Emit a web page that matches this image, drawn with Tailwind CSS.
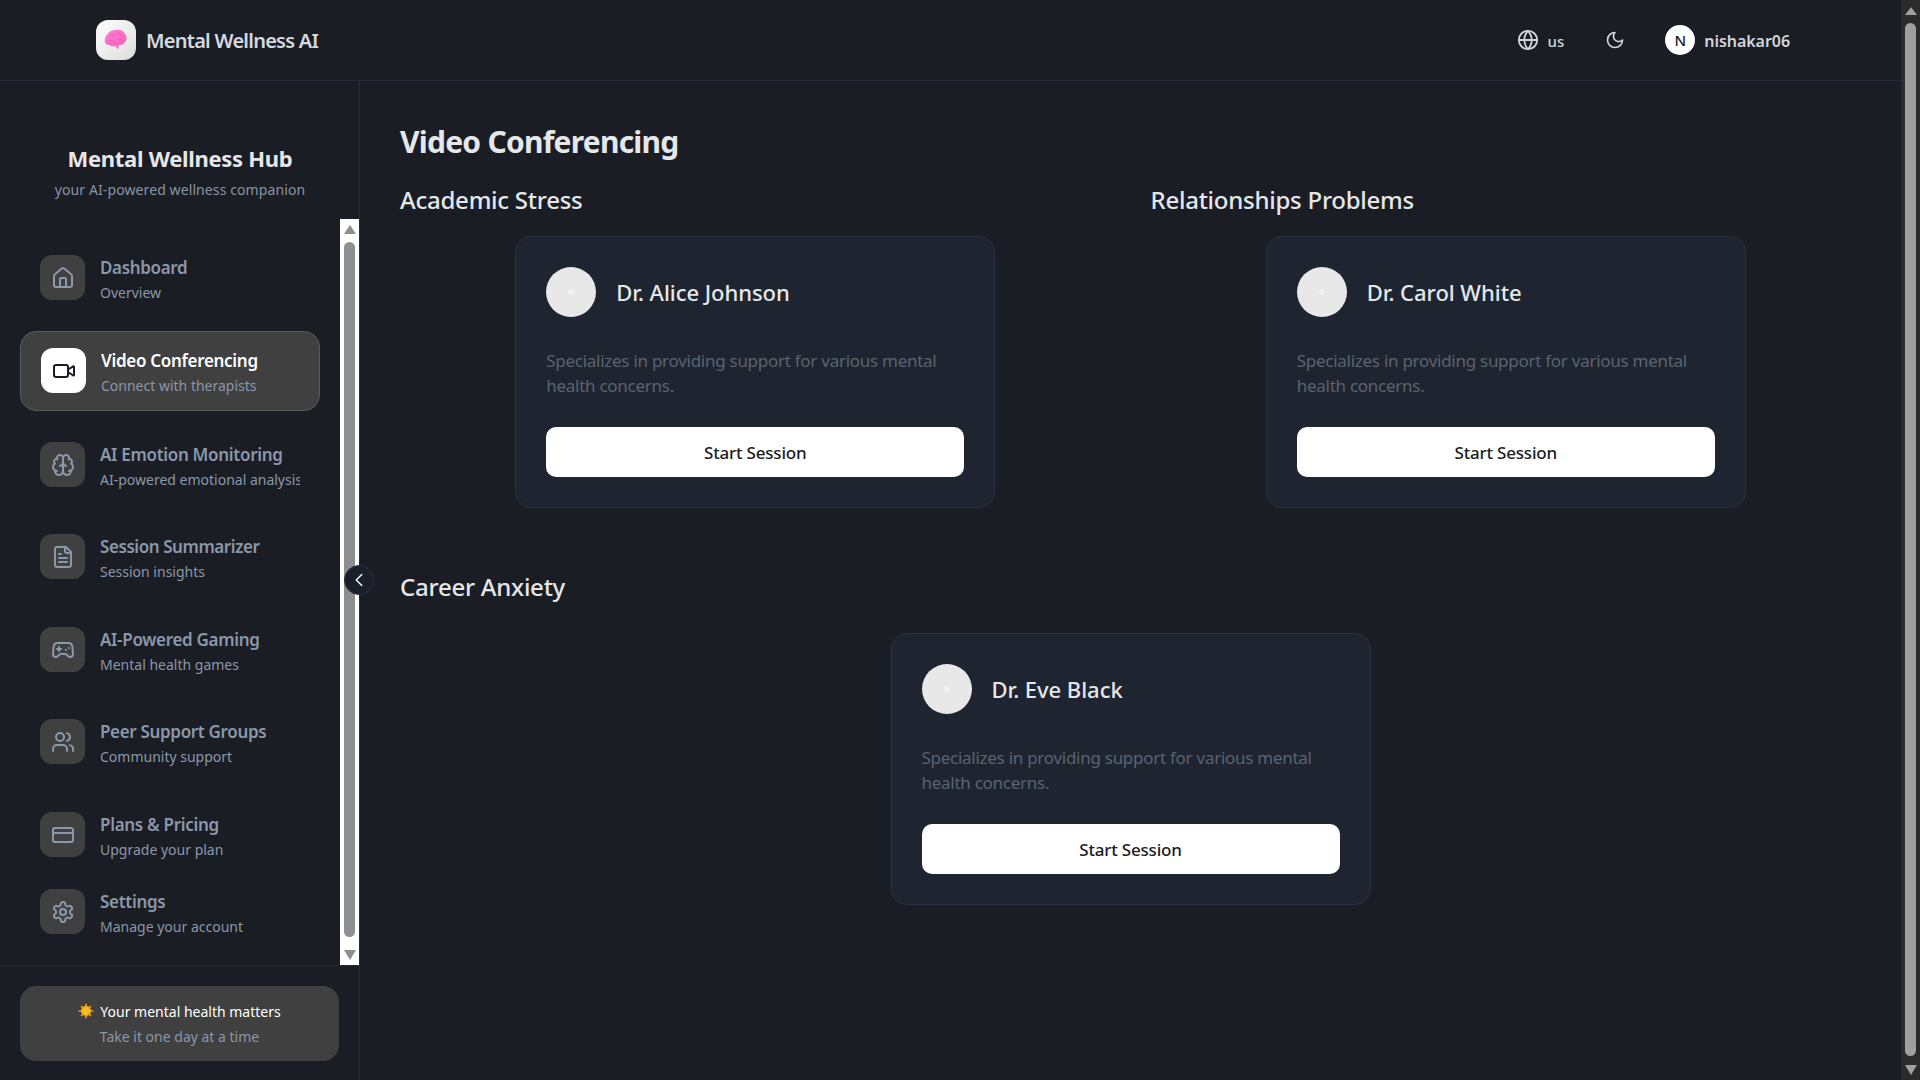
<!DOCTYPE html>
<html lang="en">
<head>
    <meta charset="UTF-8">
    <title>Mental Wellness AI</title>
    <script src="https://cdn.jsdelivr.net/npm/@tailwindcss/browser@4"></script>
</head>
<body class="bg-[#1a1d23] text-white font-['Noto_Sans','Open_Sans',sans-serif] overflow-hidden">
<div class="flex h-[1080px] w-[1920px]">
    <div class="w-[1901px] flex flex-col">
        <!-- Header -->
        <header class="h-[81px] shrink-0 border-b border-[#272c3a] flex items-center justify-between pl-[96px] pr-[111px]">
            <div class="flex items-center gap-[10px]">
                <div class="w-10 h-10 rounded-xl bg-gradient-to-br from-white to-[#dcdcdc] flex items-center justify-center">
                    <svg width="24" height="22" viewBox="0 0 24 22"><defs><linearGradient id="brain" x1="0" y1="0" x2="1" y2="1"><stop offset="0" stop-color="#f77fd8"/><stop offset="1" stop-color="#ff5fb4"/></linearGradient></defs><path d="M4 5c1-3 5-4 8-4 4-1 8 1 9 4 2 2 2 6 0 8-1 2-3 3-5 3l-2 1 1 2-2 1-1-3c-3 1-5 0-7-1-3 0-5-3-4-6 0-2 1-4 3-5z" fill="url(#brain)"/><path d="M6 7c2-2 4-1 5 0M13 4c2 0 4 1 4 3M4 11c2 1 4 1 6 0M13 11c2-1 4-1 6 1M9 14c1-1 3-1 4 0" stroke="#e84fb4" stroke-width=".7" fill="none"/></svg>
                </div>
                <span class="text-[20px] pt-[2px] font-semibold text-[#d5d9e0] tracking-[-0.75px]">Mental Wellness AI</span>
            </div>
            <div class="flex items-center text-[#d1d5db]">
                <svg class="w-[22px] h-[22px]" viewBox="0 0 24 24" fill="none" stroke="currentColor" stroke-width="2" stroke-linecap="round" stroke-linejoin="round"><circle cx="12" cy="12" r="10"/><path d="M12 2a14.5 14.5 0 0 0 0 20 14.5 14.5 0 0 0 0-20"/><path d="M2 12h20"/></svg>
                <span class="ml-[9px] mt-[3px] text-[15px] font-medium">us</span>
                <svg class="ml-[41px] w-5 h-5" viewBox="0 0 24 24" fill="none" stroke="currentColor" stroke-width="2" stroke-linecap="round" stroke-linejoin="round"><path d="M12 3a6 6 0 0 0 9 9 9 9 0 1 1-9-9Z"/></svg>
                <div class="ml-[40px] w-[30px] h-[30px] rounded-full bg-white text-[#1a1d23] text-[15px] font-medium flex items-center justify-center">N</div>
                <span class="ml-[9px] pt-[2px] text-[16px] font-semibold tracking-[-0.05px]">nishakar06</span>
            </div>
        </header>

        <div class="flex flex-1 min-h-0">
            <!-- Sidebar -->
            <aside class="relative w-[360px] shrink-0 border-r border-[#272c3a] flex flex-col">
                <div class="h-[138px] shrink-0 pt-[60px] pl-[1px] text-center">
                    <h2 class="text-[22px] leading-[34px] font-bold text-[#e5e7eb] tracking-[-0.3px]">Mental Wellness Hub</h2>
                    <p class="text-[14px] leading-[22px] mt-[4px] text-[#8b93a3] tracking-[0.1px]">your AI-powered wellness companion</p>
                </div>
                <div class="flex h-[747px] shrink-0 border-b border-[#272c3a]">
                    <nav class="w-[340px] pl-5 pr-5 pt-[19px]">
                        <a class="h-[79px] flex items-center gap-[15px] pl-[20px] mb-[14px]">
                            <div class="w-[45px] h-[45px] shrink-0 rounded-xl bg-[#404040] text-[#8b97aa] flex items-center justify-center">
                                <svg class="w-6 h-6" viewBox="0 0 24 24" fill="none" stroke="currentColor" stroke-width="2" stroke-linecap="round" stroke-linejoin="round"><path d="M15 21v-8a1 1 0 0 0-1-1h-4a1 1 0 0 0-1 1v8"/><path d="M3 10a2 2 0 0 1 .709-1.528l7-5.999a2 2 0 0 1 2.582 0l7 5.999A2 2 0 0 1 21 10v9a2 2 0 0 1-2 2H5a2 2 0 0 1-2-2z"/></svg>
                            </div>
                            <div class="w-[200px] pt-[3px] overflow-hidden whitespace-nowrap">
                                <div class="text-[17px] leading-[26px] font-semibold text-[#8b97aa] tracking-[-0.35px]">Dashboard</div>
                                <div class="text-[14px] leading-[23px] text-[#8b97aa]">Overview</div>
                            </div>
                        </a>
                        <a class="h-[80px] flex items-center gap-[15px] pl-[20px] mb-[14px] rounded-2xl bg-[#404040] border border-[#5a5a5a]">
                            <div class="w-[45px] h-[45px] -mt-[1px] shrink-0 rounded-xl bg-white text-[#1a1d23] flex items-center justify-center">
                                <svg class="w-6 h-6" viewBox="0 0 24 24" fill="none" stroke="currentColor" stroke-width="2" stroke-linecap="round" stroke-linejoin="round"><path d="m16 13 5.223 3.482a.5.5 0 0 0 .777-.416V7.87a.5.5 0 0 0-.752-.432L16 10.5"/><rect x="2" y="6" width="14" height="12" rx="2"/></svg>
                            </div>
                            <div class="w-[200px] pt-[2px] overflow-hidden whitespace-nowrap">
                                <div class="text-[17px] leading-[26px] font-semibold text-white tracking-[-0.3px]">Video Conferencing</div>
                                <div class="text-[14px] leading-[23px] text-[#8b97aa]">Connect with therapists</div>
                            </div>
                        </a>
                        <a class="h-[79px] flex items-center gap-[15px] pl-[20px] mb-[13px]">
                            <div class="w-[45px] h-[45px] shrink-0 rounded-xl bg-[#404040] text-[#8b97aa] flex items-center justify-center">
                                <svg class="w-6 h-6" viewBox="0 0 24 24" fill="none" stroke="currentColor" stroke-width="2" stroke-linecap="round" stroke-linejoin="round"><path d="M12 5a3 3 0 1 0-5.997.125 4 4 0 0 0-2.526 5.77 4 4 0 0 0 .556 6.588A4 4 0 1 0 12 18Z"/><path d="M12 5a3 3 0 1 1 5.997.125 4 4 0 0 1 2.526 5.77 4 4 0 0 1-.556 6.588A4 4 0 1 1 12 18Z"/><path d="M15 13a4.5 4.5 0 0 1-3-4 4.5 4.500 0 0 1-3 4"/><path d="M17.599 6.5a3 3 0 0 0 .399-1.375"/><path d="M6.003 5.125A3 3 0 0 0 6.401 6.5"/><path d="M3.477 10.896a4 4 0 0 1 .585-.396"/><path d="M19.938 10.5a4 4 0 0 1 .585.396"/><path d="M6 18a4 4 0 0 1-1.967-.516"/><path d="M19.967 17.484A4 4 0 0 1 18 18"/></svg>
                            </div>
                            <div class="w-[200px] pt-[3px] overflow-hidden whitespace-nowrap">
                                <div class="text-[17px] leading-[26px] font-semibold text-[#8b97aa] tracking-[-0.3px]">AI Emotion Monitoring</div>
                                <div class="text-[14px] leading-[23px] text-[#8b97aa]">AI-powered emotional analysis</div>
                            </div>
                        </a>
                        <a class="h-[79px] flex items-center gap-[15px] pl-[20px] mb-[14px]">
                            <div class="w-[45px] h-[45px] shrink-0 rounded-xl bg-[#404040] text-[#8b97aa] flex items-center justify-center">
                                <svg class="w-6 h-6" viewBox="0 0 24 24" fill="none" stroke="currentColor" stroke-width="2" stroke-linecap="round" stroke-linejoin="round"><path d="M15 2H6a2 2 0 0 0-2 2v16a2 2 0 0 0 2 2h12a2 2 0 0 0 2-2V7Z"/><path d="M14 2v4a2 2 0 0 0 2 2h4"/><path d="M10 9H8"/><path d="M16 13H8"/><path d="M16 17H8"/></svg>
                            </div>
                            <div class="w-[200px] pt-[3px] overflow-hidden whitespace-nowrap">
                                <div class="text-[17px] leading-[26px] font-semibold text-[#8b97aa] tracking-[-0.43px]">Session Summarizer</div>
                                <div class="text-[14px] leading-[23px] text-[#8b97aa]">Session insights</div>
                            </div>
                        </a>
                        <a class="h-[79px] flex items-center gap-[15px] pl-[20px] mb-[13px]">
                            <div class="w-[45px] h-[45px] shrink-0 rounded-xl bg-[#404040] text-[#8b97aa] flex items-center justify-center">
                                <svg class="w-6 h-6" viewBox="0 0 24 24" fill="none" stroke="currentColor" stroke-width="2" stroke-linecap="round" stroke-linejoin="round"><line x1="6" x2="10" y1="11" y2="11"/><line x1="8" x2="8" y1="9" y2="13"/><line x1="15" x2="15.01" y1="12" y2="12"/><line x1="18" x2="18.01" y1="10" y2="10"/><path d="M17.32 5H6.68a4 4 0 0 0-3.978 3.59c-.006.052-.01.101-.017.152C2.604 9.416 2 14.456 2 16a3 3 0 0 0 3 3c1 0 1.5-.5 2-1l1.414-1.414A2 2 0 0 1 9.828 16h4.344a2 2 0 0 1 1.414.586L17 18c.5.5 1 1 2 1a3 3 0 0 0 3-3c0-1.545-.604-6.584-.685-7.258-.007-.05-.011-.1-.017-.151A4 4 0 0 0 17.32 5z"/></svg>
                            </div>
                            <div class="w-[200px] pt-[3px] overflow-hidden whitespace-nowrap">
                                <div class="text-[17px] leading-[26px] font-semibold text-[#8b97aa] tracking-[-0.3px]">AI-Powered Gaming</div>
                                <div class="text-[14px] leading-[23px] text-[#8b97aa]">Mental health games</div>
                            </div>
                        </a>
                        <a class="h-[79px] flex items-center gap-[15px] pl-[20px] mb-[14px]">
                            <div class="w-[45px] h-[45px] shrink-0 rounded-xl bg-[#404040] text-[#8b97aa] flex items-center justify-center">
                                <svg class="w-6 h-6" viewBox="0 0 24 24" fill="none" stroke="currentColor" stroke-width="2" stroke-linecap="round" stroke-linejoin="round"><path d="M16 21v-2a4 4 0 0 0-4-4H6a4 4 0 0 0-4 4v2"/><circle cx="9" cy="7" r="4"/><path d="M22 21v-2a4 4 0 0 0-3-3.87"/><path d="M16 3.13a4 4 0 0 1 0 7.75"/></svg>
                            </div>
                            <div class="w-[200px] pt-[3px] overflow-hidden whitespace-nowrap">
                                <div class="text-[17px] leading-[26px] font-semibold text-[#8b97aa] tracking-[-0.33px]">Peer Support Groups</div>
                                <div class="text-[14px] leading-[23px] text-[#8b97aa]">Community support</div>
                            </div>
                        </a>
                        <a class="h-[79px] flex items-center gap-[15px] pl-[20px] mb-[-2px]">
                            <div class="w-[45px] h-[45px] shrink-0 rounded-xl bg-[#404040] text-[#8b97aa] flex items-center justify-center">
                                <svg class="w-6 h-6" viewBox="0 0 24 24" fill="none" stroke="currentColor" stroke-width="2" stroke-linecap="round" stroke-linejoin="round"><rect width="20" height="14" x="2" y="5" rx="2"/><line x1="2" x2="22" y1="10" y2="10"/></svg>
                            </div>
                            <div class="w-[200px] pt-[3px] overflow-hidden whitespace-nowrap">
                                <div class="text-[17px] leading-[26px] font-semibold text-[#8b97aa] tracking-[-0.3px]">Plans &amp; Pricing</div>
                                <div class="text-[14px] leading-[23px] text-[#8b97aa]">Upgrade your plan</div>
                            </div>
                        </a>
                        <a class="h-[79px] flex items-center gap-[15px] pl-[20px]">
                            <div class="w-[45px] h-[45px] shrink-0 rounded-xl bg-[#404040] text-[#8b97aa] flex items-center justify-center">
                                <svg class="w-6 h-6" viewBox="0 0 24 24" fill="none" stroke="currentColor" stroke-width="2" stroke-linecap="round" stroke-linejoin="round"><path d="M12.22 2h-.44a2 2 0 0 0-2 2v.18a2 2 0 0 1-1 1.73l-.43.25a2 2 0 0 1-2 0l-.15-.08a2 2 0 0 0-2.73.73l-.22.38a2 2 0 0 0 .73 2.73l.15.1a2 2 0 0 1 1 1.72v.51a2 2 0 0 1-1 1.74l-.15.09a2 2 0 0 0-.73 2.73l.22.38a2 2 0 0 0 2.73.73l.15-.08a2 2 0 0 1 2 0l.43.25a2 2 0 0 1 1 1.73V20a2 2 0 0 0 2 2h.44a2 2 0 0 0 2-2v-.18a2 2 0 0 1 1-1.73l.43-.25a2 2 0 0 1 2 0l.15.08a2 2 0 0 0 2.73-.73l.22-.39a2 2 0 0 0-.73-2.73l-.15-.08a2 2 0 0 1-1-1.74v-.5a2 2 0 0 1 1-1.74l.15-.09a2 2 0 0 0 .73-2.73l-.22-.38a2 2 0 0 0-2.73-.73l-.15.08a2 2 0 0 1-2 0l-.43-.25a2 2 0 0 1-1-1.73V4a2 2 0 0 0-2-2z"/><circle cx="12" cy="12" r="3"/></svg>
                            </div>
                            <div class="w-[200px] pt-[3px] overflow-hidden whitespace-nowrap">
                                <div class="text-[17px] leading-[26px] font-semibold text-[#8b97aa] tracking-[-0.3px]">Settings</div>
                                <div class="text-[14px] leading-[23px] text-[#8b97aa]">Manage your account</div>
                            </div>
                        </a>
                    </nav>
                    <!-- sidebar scrollbar -->
                    <div class="w-[19px] bg-white flex flex-col items-center pt-[6px] pb-[5px]">
                        <div class="w-0 h-0 border-x-[6px] border-x-transparent border-b-[9px] border-b-[#8f8f8f]"></div>
                        <div class="w-[11px] flex-1 rounded-full bg-[#8f8f8f] mt-[8px] mb-[13px]"></div>
                        <div class="w-0 h-0 border-x-[6px] border-x-transparent border-t-[10px] border-t-[#8f8f8f]"></div>
                    </div>
                </div>
                <div class="px-5 pt-[20px]">
                    <div class="h-[75px] rounded-2xl bg-[#404040] flex flex-col items-center justify-center">
                        <div class="text-[14px] leading-[25px] text-white flex items-center gap-[6px]">
                            <svg class="w-4 h-4" viewBox="0 0 24 24"><circle cx="12" cy="12" r="7.500" fill="#fbbf24"/><path d="M12 1v6M12 17v6M1 12h6M17 12h6M4.500 4.500l4 4M15.500 15.500l4 4M19.500 4.500l-4 4M8.500 15.500l-4 4" stroke="#f59e0b" stroke-width="2.500"/></svg>
                            Your mental health matters
                        </div>
                        <div class="text-[14px] leading-[25px] text-[#8b97aa]">Take it one day at a time</div>
                    </div>
                </div>
                <button class="absolute right-[-15px] top-[484px] w-[30px] h-[30px] rounded-full bg-[#1a2029] border border-[#2a3040] text-white flex items-center justify-center">
                    <svg class="w-[22px] h-[22px]" viewBox="0 0 24 24" fill="none" stroke="currentColor" stroke-width="1.500" stroke-linecap="round" stroke-linejoin="round"><path d="m15 18-6-6 6-6"/></svg>
                </button>
            </aside>

            <!-- Main -->
            <main class="flex-1 px-10 pt-[40px]">
                <h1 class="text-[30px] leading-[42px] font-bold text-[#e5e7eb] tracking-[-0.75px]">Video Conferencing</h1>
                <div class="grid grid-cols-2 gap-x-10 mt-[19px]">
                    <section>
                        <h2 class="text-[24px] leading-[36px] font-medium text-[#e5e7eb] tracking-[-0.25px]">Academic Stress</h2>
                        <div class="flex justify-center mt-[18px]">
                            <div class="w-[480px] h-[272px] rounded-2xl bg-[#1f2530] border border-[#2a3040] p-[30px]">
                                <div class="flex items-center gap-[20px]">
                                    <div class="w-[50px] h-[50px] rounded-full bg-[#e8e8e8] flex items-center justify-center"><div class="w-[6px] h-[6px] rounded-full bg-[#f2f2f2]"></div></div>
                                    <h3 class="text-[22px] font-medium text-[#e5e7eb] tracking-[-0.05px]">Dr. Alice Johnson</h3>
                                </div>
                                <p class="mt-[31px] text-[17px] leading-[25px] text-[#5b6270] tracking-[-0.27px]">Specializes in providing support for various mental health concerns.</p>
                                <button class="mt-[29px] w-full h-[50px] pt-[1px] rounded-[10px] bg-white text-[#1a1d23] text-[17px] font-medium tracking-[-0.2px]">Start Session</button>
                            </div>
                        </div>
                    </section>
                    <section>
                        <h2 class="text-[24px] leading-[36px] font-medium text-[#e5e7eb] tracking-[-0.25px]">Relationships Problems</h2>
                        <div class="flex justify-center mt-[18px]">
                            <div class="w-[480px] h-[272px] rounded-2xl bg-[#1f2530] border border-[#2a3040] p-[30px]">
                                <div class="flex items-center gap-[20px]">
                                    <div class="w-[50px] h-[50px] rounded-full bg-[#e8e8e8] flex items-center justify-center"><div class="w-[6px] h-[6px] rounded-full bg-[#f2f2f2]"></div></div>
                                    <h3 class="text-[22px] font-medium text-[#e5e7eb] tracking-[-0.05px]">Dr. Carol White</h3>
                                </div>
                                <p class="mt-[31px] text-[17px] leading-[25px] text-[#5b6270] tracking-[-0.27px]">Specializes in providing support for various mental health concerns.</p>
                                <button class="mt-[29px] w-full h-[50px] pt-[1px] rounded-[10px] bg-white text-[#1a1d23] text-[17px] font-medium tracking-[-0.2px]">Start Session</button>
                            </div>
                        </div>
                    </section>
                    <section class="col-span-2 mt-[61px]">
                        <h2 class="text-[24px] leading-[36px] font-medium text-[#e5e7eb] tracking-[-0.25px]">Career Anxiety</h2>
                        <div class="flex justify-center mt-[28px]">
                            <div class="w-[480px] h-[272px] rounded-2xl bg-[#1f2530] border border-[#2a3040] p-[30px]">
                                <div class="flex items-center gap-[20px]">
                                    <div class="w-[50px] h-[50px] rounded-full bg-[#e8e8e8] flex items-center justify-center"><div class="w-[6px] h-[6px] rounded-full bg-[#f2f2f2]"></div></div>
                                    <h3 class="text-[22px] font-medium text-[#e5e7eb] tracking-[-0.05px]">Dr. Eve Black</h3>
                                </div>
                                <p class="mt-[31px] text-[17px] leading-[25px] text-[#5b6270] tracking-[-0.27px]">Specializes in providing support for various mental health concerns.</p>
                                <button class="mt-[29px] w-full h-[50px] pt-[1px] rounded-[10px] bg-white text-[#1a1d23] text-[17px] font-medium tracking-[-0.2px]">Start Session</button>
                            </div>
                        </div>
                    </section>
                </div>
            </main>
        </div>
    </div>
    <!-- page scrollbar -->
    <div class="w-[19px] bg-[#2b2b2b] flex flex-col items-center pt-[7px] pb-[5px]">
        <div class="w-0 h-0 border-x-[6px] border-x-transparent border-b-[8px] border-b-[#9f9f9f]"></div>
        <div class="w-[11px] flex-1 rounded-full bg-[#9f9f9f] mt-[8px] mb-[9px]"></div>
        <div class="w-0 h-0 border-x-[6px] border-x-transparent border-t-[10px] border-t-[#9f9f9f]"></div>
    </div>
</div>
</body>
</html>
